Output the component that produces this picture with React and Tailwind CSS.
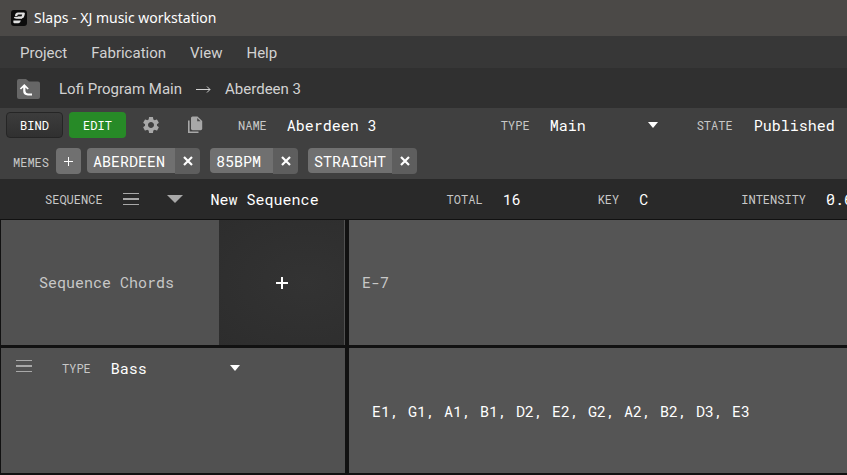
import React from "react";

const LABEL = "shrink-0 font-['Roboto_Mono','DejaVu_Sans_Mono',monospace] text-[12px] leading-4 text-[#c8c8c8]";
const VALUE = "font-['Roboto_Mono','DejaVu_Sans_Mono',monospace] text-[15px] leading-5";

function AppLogo() {
  return (
    <svg className="h-4 w-4 shrink-0" viewBox="0 0 16 16" aria-hidden="true">
      <rect width="16" height="16" rx="3" fill="#0c0c0c" />
      <path d="M4 6 Q4 2.5 7 2.5 H13 Q14.2 2.5 13.8 4 L13.3 6 Q12.8 8.2 11 8.2 H6.5 L7 6.6 H10.5 L11.2 4.6 H7.5 Q6.6 4.6 6.2 6 Z" fill="#e0e0e0" />
      <path d="M2.8 8 Q3 6.8 4.4 6.8 H11.5 L11 8.8 H5.2 Z" fill="#e0e0e0" />
      <path d="M2.4 10.6 H9.8 Q9.4 13.2 7.4 13.2 H3.2 Q1.8 13.2 2.4 10.6 Z" fill="#e0e0e0" />
    </svg>
  );
}

function FolderUp() {
  return (
    <svg className="h-5 w-6" viewBox="0 0 24 20" aria-hidden="true">
      <path d="M2 0 H9 L12 2.5 H21 Q23 2.5 23 4.5 V18 Q23 20 21 20 H2 Q0 20 0 18 V2 Q0 0 2 0 Z" fill="#666" />
      <path d="M2.8 9.5 L7.3 5 L11.8 9.5 L10.6 10.4 L8.4 8.6 V12 Q8.6 14.4 11 14.4 H15 V16.4 H10.8 Q6.2 16.4 6.2 12 V8.6 L4 10.4 Z" fill="#fff" />
    </svg>
  );
}

function Gear() {
  return (
    <svg className="h-5 w-5" viewBox="0 0 24 24" fill="#a8a8a8" aria-hidden="true">
      <path d="M19.14 12.94c.04-.3.06-.61.06-.94 0-.32-.02-.64-.07-.94l2.03-1.58c.18-.14.23-.41.12-.61l-1.92-3.32c-.12-.22-.37-.29-.59-.22l-2.39.96c-.5-.38-1.03-.7-1.62-.94l-.36-2.54c-.04-.24-.24-.41-.48-.41h-3.84c-.24 0-.43.17-.47.41l-.36 2.54c-.59.24-1.13.57-1.62.94l-2.39-.96c-.22-.08-.47 0-.59.22L2.74 8.87c-.12.21-.08.47.12.61l2.03 1.58c-.05.3-.09.63-.09.94s.02.64.07.94l-2.03 1.58c-.18.14-.23.41-.12.61l1.92 3.32c.12.22.37.29.59.22l2.39-.96c.5.38 1.03.7 1.62.94l.36 2.54c.05.24.24.41.48.41h3.84c.24 0 .44-.17.47-.41l.36-2.54c.59-.24 1.13-.56 1.62-.94l2.39.96c.22.08.47 0 .59-.22l1.92-3.32c.12-.22.07-.47-.12-.61l-2.01-1.58zM12 15.6c-1.98 0-3.6-1.62-3.6-3.6s1.62-3.6 3.6-3.6 3.6 1.62 3.6 3.6-1.62 3.6-3.6 3.6z" />
    </svg>
  );
}

function Copy() {
  return (
    <svg className="h-[18px] w-4" viewBox="0 0 16 18" aria-hidden="true">
      <path d="M1.8 4.5 V16.2 H11.5" fill="none" stroke="#a8a8a8" strokeWidth="1.6" />
      <path d="M5.5 0.5 H10.5 L15.2 5 V12.6 Q15.2 14.2 13.6 14.2 H5.5 Q4 14.2 4 12.6 V2 Q4 0.5 5.5 0.5 Z" fill="#a8a8a8" />
      <path d="M10.2 2 V5.2 H13.6 Z" fill="#484848" />
    </svg>
  );
}

function Bars() {
  return (
    <svg className="h-[13px] w-4" viewBox="0 0 16 13" fill="#a8a8a8" shapeRendering="crispEdges" aria-hidden="true">
      <rect width="16" height="1" />
      <rect y="5" width="16" height="2" />
      <rect y="11" width="16" height="1" />
    </svg>
  );
}

function Cross() {
  return (
    <svg className="h-[10px] w-[10px]" viewBox="0 0 10 10" aria-hidden="true">
      <path d="M1 1 L9 9 M9 1 L1 9" stroke="#fff" strokeWidth="2.2" />
    </svg>
  );
}

function Plus({ size, width }) {
  return (
    <svg width={size} height={size} viewBox={`0 0 ${size} ${size}`} shapeRendering="crispEdges" fill="#fff" aria-hidden="true">
      <rect x={(size - width) / 2} width={width} height={size} />
      <rect y={(size - width) / 2} width={size} height={width} />
    </svg>
  );
}

function Caret() {
  return (
    <svg className="pointer-events-none h-[6px] w-[10px] shrink-0" viewBox="0 0 10 6" fill="#fff" aria-hidden="true">
      <path d="M0 0 H10 L5 6 Z" />
    </svg>
  );
}

function Select({ id, options, className }) {
  return (
    <div className={"flex shrink-0 items-center " + className}>
      <select id={id} className={VALUE + " -mr-[10px] min-w-0 flex-1 appearance-none bg-transparent text-white outline-none"}>
        {options.map((o) => <option key={o}>{o}</option>)}
      </select>
      <Caret />
    </div>
  );
}

function Meme({ name, width }) {
  return (
    <div className="flex items-start">
      <span className={"h-[25px] rounded-l-[4px] bg-[#707070] pl-[6px] font-['Roboto_Mono','DejaVu_Sans_Mono',monospace] text-[15px] leading-[27px] text-white " + width}>{name}</span>
      <button type="button" aria-label={"Remove " + name} className="flex h-[26px] w-[25px] items-center justify-center rounded-r-[4px] bg-[#5e5e5e]">
        <Cross />
      </button>
    </div>
  );
}

export default function App() {
  return (
    <div className="flex min-h-screen flex-col overflow-hidden bg-[#111] font-['Roboto',sans-serif]">
      <header className="flex h-9 items-center gap-[7px] bg-[#4b4947] pl-[11px]">
        <AppLogo />
        <h1 className="font-['Noto_Sans','Open_Sans',sans-serif] text-[14px] leading-5 text-white">Slaps - XJ music workstation</h1>
      </header>

      <nav className="flex h-8 items-center gap-6 bg-[#373737] pt-[2px] pl-5 text-[15px] leading-5 text-[#d2d2d2]">
        <button type="button">Project</button>
        <button type="button">Fabrication</button>
        <button type="button">View</button>
        <button type="button">Help</button>
      </nav>

      <div className="flex h-10 items-center bg-[#303030] pt-[2px] pl-[17px] text-[15px] leading-5 text-[#d2d2d2]">
        <button type="button" aria-label="Up"><FolderUp /></button>
        <button type="button" className="ml-[18px]">Lofi Program Main</button>
        <svg className="mx-[14px] h-[7px] w-[15px]" viewBox="0 0 15 7" aria-hidden="true">
          <path d="M0 3.5 H14 M11 0.5 L14 3.5 L11 6.5" fill="none" stroke="#d2d2d2" />
        </svg>
        <span>Aberdeen 3</span>
      </div>

      <section className="bg-[#404040]">
        <div className="flex h-9 items-center pb-[2px] pl-[6px]">
          <button type="button" className="h-[26px] w-[57px] shrink-0 rounded-[4px] border border-[#252525] bg-linear-to-b from-[#3c3c3c] to-[#303030] font-['Roboto_Mono','DejaVu_Sans_Mono',monospace] text-[12px] text-white">BIND</button>
          <button type="button" className="ml-[6px] h-[26px] w-[57px] shrink-0 rounded-[4px] bg-[#278a27] font-['Roboto_Mono','DejaVu_Sans_Mono',monospace] text-[12px] text-white">EDIT</button>
          <button type="button" aria-label="Settings" className="ml-[15px] shrink-0"><Gear /></button>
          <button type="button" aria-label="Duplicate" className="ml-[26px] shrink-0"><Copy /></button>
          <label htmlFor="name" className={LABEL + " ml-[35px]"}>NAME</label>
          <input id="name" defaultValue="Aberdeen 3" className={VALUE + " ml-[20px] w-[194px] shrink-0 bg-transparent text-white outline-none"} />
          <label htmlFor="type" className={LABEL + " ml-[20px]"}>TYPE</label>
          <Select id="type" options={["Main", "Beat", "Detail", "Macro"]} className="ml-[20px] w-[108px]" />
          <label htmlFor="state" className={LABEL + " ml-[39px]"}>STATE</label>
          <Select id="state" options={["Published", "Draft"]} className="ml-[21px] w-[116px]" />
        </div>
        <div className="flex h-[35px] items-start pt-1 pl-[13px]">
          <span className="mr-[7px] font-['Roboto_Mono','DejaVu_Sans_Mono',monospace] text-[12px] leading-[28px] text-[#c8c8c8]">MEMES</span>
          <button type="button" aria-label="Add meme" className="mr-[6px] flex h-[26px] w-[25px] items-center justify-center rounded-[4px] bg-[#707070]">
            <Plus size={9} width={1} />
          </button>
          <div className="flex gap-[10px]">
            <Meme name="ABERDEEN" width="w-[88px]" />
            <Meme name="85BPM" width="w-[63px]" />
            <Meme name="STRAIGHT" width="w-[84px]" />
          </div>
        </div>
      </section>

      <section className="flex h-10 items-center bg-[#292929] pl-[45px]">
        <span className={LABEL}>SEQUENCE</span>
        <button type="button" aria-label="Sequence menu" className="ml-[20px] shrink-0"><Bars /></button>
        <button type="button" aria-label="Choose sequence" className="ml-[28px] shrink-0">
          <svg className="h-[8px] w-4" viewBox="0 0 16 8" fill="#a8a8a8" aria-hidden="true"><path d="M0 0 H16 L8 8 Z" /></svg>
        </button>
        <input aria-label="Sequence name" defaultValue="New Sequence" className={VALUE + " ml-[28px] w-[216px] shrink-0 bg-transparent text-white outline-none"} />
        <label htmlFor="total" className={LABEL + " ml-[20px]"}>TOTAL</label>
        <input id="total" defaultValue="16" className={VALUE + " ml-[20px] w-[75px] shrink-0 bg-transparent text-white outline-none"} />
        <label htmlFor="key" className={LABEL + " ml-[20px]"}>KEY</label>
        <input id="key" defaultValue="C" className={VALUE + " ml-[20px] w-[82px] shrink-0 bg-transparent text-white outline-none"} />
        <label htmlFor="intensity" className={LABEL + " ml-[20px]"}>INTENSITY</label>
        <input id="intensity" defaultValue="0.6" className={VALUE + " ml-[20px] w-[60px] shrink-0 bg-transparent text-white outline-none"} />
      </section>

      <main className="grid flex-1 grid-cols-[344px_minmax(0,1fr)] grid-rows-[125px_125px] gap-x-1 gap-y-[3px] pt-px pl-px">
        <div className="flex bg-[#515151] pr-px">
          <h2 className={VALUE + " flex w-[218px] items-center pb-[2px] pl-[38px] text-[#c8c8c8]"}>Sequence Chords</h2>
          <button type="button" aria-label="Add chord" className="flex flex-1 items-center justify-center bg-radial-[at_70%_50%] from-[#333] to-[#2d2d2d]">
            <Plus size={12} width={2} />
          </button>
        </div>
        <div className={VALUE + " flex items-center bg-[#555] pb-[2px] pl-[13px] text-[#c8c8c8]"}>E-7</div>

        <div className="flex items-start bg-[#515151] pt-[10px] pl-[15px]">
          <button type="button" aria-label="Voice menu" className="mt-[2px]"><Bars /></button>
          <label htmlFor="voice" className={LABEL + " mt-[2px] ml-[30px]"}>TYPE</label>
          <Select id="voice" options={["Bass", "Pad", "Stab", "Drum"]} className="ml-[20px] w-[129px]" />
        </div>
        <div className={VALUE + " flex items-center bg-[#555] pl-[23px] text-white"}>E1, G1, A1, B1, D2, E2, G2, A2, B2, D3, E3</div>
      </main>
    </div>
  );
}
